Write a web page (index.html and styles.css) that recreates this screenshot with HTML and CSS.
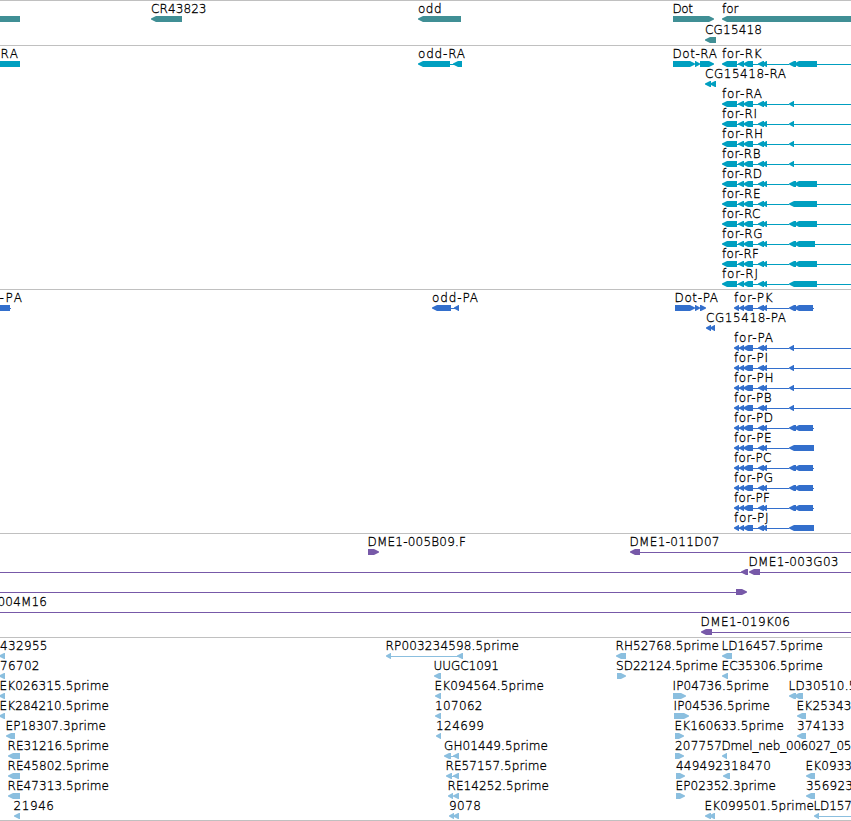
FILE: index.html
```html
<!DOCTYPE html>
<html lang="en">
<head>
    <meta charset="UTF-8">
    <meta name="viewport" content="width=device-width, initial-scale=1.0">
    <title>Genome Tracks</title>
    <link rel="stylesheet" href="styles.css">
</head>
<body>
    <main class="browser">
        <section class="track genes"><svg id="genes" width="851" height="44"></svg></section>
        <section class="track transcripts"><svg id="transcripts" width="851" height="243"></svg></section>
        <section class="track proteins"><svg id="proteins" width="851" height="243"></svg></section>
        <section class="track clones"><svg id="clones" width="851" height="103"></svg></section>
        <section class="track ests"><svg id="ests" width="851" height="182"></svg></section>
    </main>
    <script src="tracks.js"></script>
</body>
</html>
```

FILE: styles.css
```css
body {
    margin: 0;
    background-color: #fff;
    font-family: "DejaVu Sans", sans-serif;
}
.browser {
    width: 851px;
    overflow: hidden;
    border-bottom: 1px solid #c0c0c0;
}
.track {
    border-top: 1px solid #c0c0c0;
}
.track svg {
    display: block;
    overflow: hidden;
}
.track text {
    font-size: 12px;
    font-weight: 200;
    fill: #000;
    stroke: #000;
    stroke-width: 0.3px;
    white-space: pre;
}
.track path, .track rect {
    fill: currentColor;
}
.track rect {
    shape-rendering: crispEdges;
}
.genes {
    color: #408f95;
}
.transcripts {
    color: #009fc0;
}
.proteins {
    color: #336fcc;
}
.clones {
    color: #7759a8;
}
.ests {
    color: #8bbfdf;
}
```

FILE: tracks.js
```js
const NS = "http://www.w3.org/2000/svg";

function add(svg, tag, attrs, text) {
    const el = document.createElementNS(NS, tag);
    for (const key in attrs) el.setAttribute(key, attrs[key]);
    if (text) el.textContent = text;
    svg.appendChild(el);
}

// "<a,b" points left, ">a,b" points right, "=a,b" is a block, "_a,b" is a thin line
function drawShape(svg, shape, y) {
    const kind = shape[0];
    const [a, b] = shape.slice(1).split(",").map(Number);
    const tip = Math.min(5, b - a - 0.5);
    if (kind === "_") {
        add(svg, "rect", { x: a, y: y + 3, width: b - a, height: 1 });
    } else if (kind === "=") {
        add(svg, "rect", { x: a, y: y, width: b - a, height: 6 });
    } else if (kind === "<") {
        add(svg, "path", { d: `M${a} ${y + 2.5}L${a + tip} ${y}H${b}V${y + 6}H${a + tip}L${a} ${y + 3.5}Z` });
    } else {
        add(svg, "path", { d: `M${b} ${y + 2.5}L${b - tip} ${y}H${a}V${y + 6}H${b - tip}L${b} ${y + 3.5}Z` });
    }
}

// each feature: row, label, label x, label width, shapes
function drawTrack(id, features, pitch = 20) {
    const svg = document.getElementById(id);
    features.forEach(([row, label, x, width, shapes]) => {
        const top = row * pitch;
        shapes.split(" ").filter(Boolean).forEach(s => drawShape(svg, s, top + 15));
        if (label) add(svg, "text", { x: x, y: top + 12, textLength: width }, label);
    });
}

drawTrack("genes", [
    [0, "", 0, 0, "=0,20"],
    [0, "CR43823", 151, 55.5, "<151,182"],
    [0, "odd", 418, 23.5, "<418,461"],
    [0, "Dot", 672.5, 20.5, ">673,714"],
    [0, "for", 722, 16.5, "<722,856"],
    [1, "CG15418", 705, 57, "<705,716"]
], 21);

const utr = "<722,737 <738,744 <743,753 <758,764 <762,767 _737,789";
const transcripts = [
    [0, "RA", 0.5, 17.5, "=0,20"],
    [0, "odd-RA", 418, 47, "<418,450 _450,454 <453,462"],
    [0, "Dot-RA", 672.5, 44.5, ">673,695 >695,700 >700,714"],
    [1, "CG15418-RA", 705, 81, "<705,711 <710,716"]
];
[
    ["RK", 0, 39.5, "<789,796 <794,817"],
    ["RA", 2, 40, "<789,794"],
    ["RI", 3, 35, "<789,794"],
    ["RH", 4, 41, "<789,794"],
    ["RB", 5, 38.5, "<789,794"],
    ["RD", 6, 40, "<789,796 <794,817"],
    ["RE", 7, 38.5, "<789,817"],
    ["RC", 8, 38.5, "<789,796 <794,817"],
    ["RG", 9, 40.5, "<789,796 <794,815"],
    ["RF", 10, 37, "<789,796 <794,817"],
    ["RJ", 11, 36, "<789,817"]
].forEach(([name, row, width, exons]) => {
    transcripts.push([row, "for-" + name, 722, width, utr + " " + exons + " _794,851"]);
});
drawTrack("transcripts", transcripts);

const cds = "<734,739 <739,744 <743,753 <758,764 <762,767 _739,789";
const proteins = [
    [0, "-PA", -0.5, 22.5, "=0,10 _10,11"],
    [0, "odd-PA", 432, 46, "<432,451 _451,455 <454,459"],
    [0, "Dot-PA", 674.5, 43.5, ">675,695 >695,700 >700,706"],
    [1, "CG15418-PA", 706, 80, "<706,711 <710,715"]
];
[
    ["PK", 0, 38.5, "<789,796 <794,813 _813,814"],
    ["PA", 2, 39, "<789,794 _794,851"],
    ["PI", 3, 34, "<789,794 _794,851"],
    ["PH", 4, 39.5, "<789,794 _794,851"],
    ["PB", 5, 37.5, "<789,794 _794,851"],
    ["PD", 6, 39, "<789,796 <794,813 _813,814"],
    ["PE", 7, 37.5, "<789,814"],
    ["PC", 8, 37.5, "<789,796 <794,813 _813,814"],
    ["PG", 9, 39, "<789,796 <794,813 _813,814"],
    ["PF", 10, 36, "<789,796 <794,813 _813,814"],
    ["PJ", 11, 34.5, "<789,814"]
].forEach(([name, row, width, exons]) => {
    proteins.push([row, "for-" + name, 734, width, cds + " " + exons]);
});
drawTrack("proteins", proteins);

drawTrack("clones", [
    [0, "DME1-005B09.F", 367.5, 98.5, ">368,379"],
    [0, "DME1-011D07", 629.5, 90, "<630,640 _640,851"],
    [1, "", 0, 0, "_0,743 <741,748"],
    [1, "DME1-003G03", 748.5, 90, "<749,760 _760,851"],
    [2, "", 0, 0, "_0,736 >736,747"],
    [3, "004M16", -2.5, 49.5, "_0,851"],
    [4, "DME1-019K06", 700.5, 89.5, "<701,712 _712,851"]
]);

drawTrack("ests", [
    [0, "432955", 0, 47.5, "<-1,5"],
    [1, "76702", 0, 39.5, "<-1,5"],
    [2, "EK026315.5prime", -0.5, 109.5, "<-1,5"],
    [3, "EK284210.5prime", -0.5, 109.5, "<-1,5"],
    [4, "EP18307.3prime", 5.5, 100.5, "<6,15"],
    [5, "RE31216.5prime", 7.5, 101.5, "<8,20"],
    [6, "RE45802.5prime", 7.5, 101.5, "<8,20"],
    [7, "RE47313.5prime", 7.5, 101.5, "<8,20"],
    [8, "21946", 13.5, 40.5, "<14,20"],

    [0, "RP003234598.5prime", 385.5, 133.5, "<386,391 _391,458 <457,463"],
    [1, "UUGC1091", 433.5, 65.5, "<434,441"],
    [2, "EK094564.5prime", 434.5, 109.5, "<435,441"],
    [3, "107062", 435, 47.5, "<435,441"],
    [4, "124699", 436, 48, "<436,441"],
    [5, "GH01449.5prime", 444, 104, "<444,451 _451,454 <453,459"],
    [6, "RE57157.5prime", 445.5, 101.5, "<446,452 _452,454 <453,459"],
    [7, "RE14252.5prime", 447.5, 101.5, "<448,453 <453,459"],
    [8, "9078", 449, 32, "<449,454 <453,459"],

    [0, "RH52768.5prime", 615.5, 103.5, "<616,626"],
    [1, "SD22124.5prime", 616, 102, ">617,626"],
    [2, "IP04736.5prime", 672.5, 96.5, ">673,686"],
    [3, "IP04536.5prime", 673.5, 96.5, ">674,689"],
    [4, "EK160633.5prime", 674.5, 109.5, ">675,684"],
    [5, "207757", 675, 47, ">675,684"],
    [6, "449492", 676, 47, ">676,685"],
    [7, "EP02352.3prime", 675.5, 100.5, ">676,685"],
    [8, "EK099501.5prime", 704.5, 109.5, "<705,711 <709,715"],

    [0, "LD16457.5prime", 721.5, 101.5, "<722,732"],
    [1, "EC35306.5prime", 721.5, 101.5, "<722,728"],
    [5, "Dmel_neb_006027_05", 721.5, 130, "<722,727"],
    [6, "318470", 723, 48, "<723,730"],
    [2, "LD30510.5", 788.5, 68, "<789,796 <794,803"],
    [3, "EK25343", 796.5, 55, "<797,806"],
    [4, "374133", 797, 47.5, "<797,806"],
    [6, "EK0933", 805.5, 46.5, "<806,815"],
    [7, "356923", 806, 47, "<806,815"],
    [8, "LD157", 813.5, 38.5, "<814,819 _819,851"]
]);
```
